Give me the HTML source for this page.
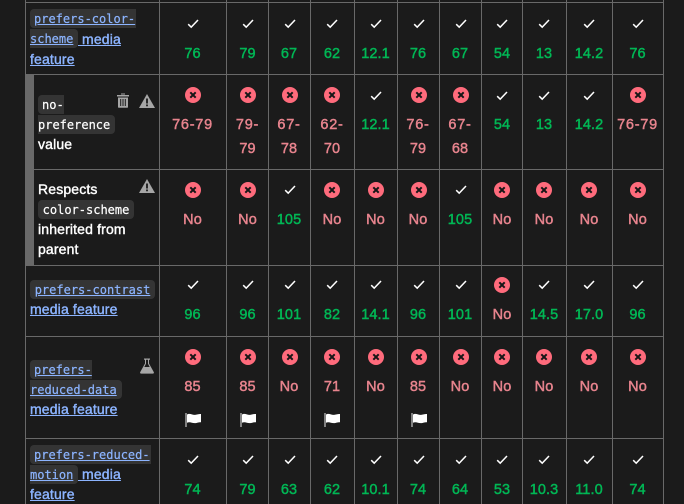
<!DOCTYPE html>
<html><head><meta charset="utf-8"><style>
html,body{margin:0;padding:0;background:#1b1b1b}
#p{position:relative;width:684px;height:504px;overflow:hidden;background:#1b1b1b;font:14px/20px "Liberation Sans",sans-serif;color:#fff}
.h,.v,.bar{position:absolute;background:#696969}
.h{left:25px;width:639px;height:1px}
.v{width:1px}
.bar{left:26px;top:75px;width:8px;height:190px}
.r{position:absolute;left:0;top:0;width:684px;height:0}
.r svg{position:absolute;top:0;width:18px;height:18px;overflow:visible}
.r span{position:absolute;text-align:center;font-size:14.5px;letter-spacing:.1px;white-space:nowrap;-webkit-text-stroke:.45px currentColor}
.g{color:#00b755}.n{color:#e8848e}
.r span.w{letter-spacing:.75px}
.c1{left:159px;width:67px}.c2{left:226px;width:43px}.c3{left:268px;width:42px}.c4{left:310px;width:44px}.c5{left:354px;width:43px}.c6{left:397px;width:42px}.c7{left:439px;width:42px}.c8{left:481px;width:42px}.c9{left:522px;width:44px}.c10{left:566px;width:46px}.c11{left:612px;width:51px}
svg.c1{left:184px;width:18px}svg.c2{left:239px}svg.c3{left:281px}svg.c4{left:323px}svg.c5{left:367px}svg.c6{left:410px}svg.c7{left:452px}svg.c8{left:493px}svg.c9{left:535px}svg.c10{left:580px}svg.c11{left:629px}
.l{position:absolute;white-space:nowrap;letter-spacing:.15px;-webkit-text-stroke:.4px currentColor;line-height:20px}
.a{color:#8cb4ff;text-decoration:underline}
.k{position:absolute;height:19px;background:#343434;font:12px/21px "DejaVu Sans Mono","Liberation Mono",monospace;white-space:nowrap;box-sizing:border-box;color:#fff;-webkit-text-stroke:.2px currentColor}
.k.a{color:#8cb4ff}
.i{position:absolute;overflow:visible}
</style></head><body><div id="p">
<svg width="0" height="0" style="position:absolute"><defs>
<symbol id="ck" viewBox="0 0 18 18"><path d="M4.200 9.200l3 3L14 5" fill="none" stroke="#fff" stroke-width="1.500"/></symbol>
<symbol id="xx" viewBox="0 0 18 18"><circle cx="9" cy="9" r="8" fill="#ff6b7c"/><path d="M6.300 6.300l5.400 5.400M11.700 6.300l-5.400 5.400" fill="none" stroke="#161616" stroke-width="2"/></symbol>
<symbol id="fl" viewBox="0 0 18 18"><path d="M2 2v14" stroke="#bbb" stroke-width="1.300" fill="none"/><path d="M3 3.500c3-1.600 5 .6 8 .4 2-.2 3-.9 6-.9v8.200c-3 0-4 .8-6 .9-3 .1-5-1.700-8-.4z" fill="#fff"/></symbol>
</defs></svg>

<div class="h" style="top:2px"></div><div class="h" style="top:74px"></div><div class="h" style="top:169px;left:34px;width:630px"></div><div class="h" style="top:265px"></div><div class="h" style="top:336px"></div><div class="h" style="top:438px"></div>
<div class="v" style="left:25px;top:0;height:504px"></div>
<div class="v" style="left:159px;top:0;height:504px"></div>
<div class="v" style="left:226px;top:0;height:504px"></div>
<div class="v" style="left:268px;top:0;height:504px"></div>
<div class="v" style="left:310px;top:0;height:504px"></div>
<div class="v" style="left:354px;top:0;height:504px"></div>
<div class="v" style="left:397px;top:0;height:504px"></div>
<div class="v" style="left:439px;top:0;height:504px"></div>
<div class="v" style="left:481px;top:0;height:504px"></div>
<div class="v" style="left:522px;top:0;height:504px"></div>
<div class="v" style="left:566px;top:0;height:504px"></div>
<div class="v" style="left:612px;top:0;height:504px"></div>
<div class="v" style="left:663px;top:0;height:504px"></div>
<div class="bar"></div>

<!-- left column -->
<span class="k a" style="left:30px;top:9px;width:106px;padding-left:4px;border-radius:4px 0 0 4px">prefers-color-</span>
<span class="k a" style="left:30px;top:29px;width:48px;border-radius:0 4px 4px 0">scheme</span>
<span class="l a" style="left:78px;top:29px">&nbsp;media</span>
<span class="l a" style="left:30px;top:48.500px">feature</span>

<span class="k" style="left:38px;top:95px;width:26px;padding-left:4px;border-radius:4px 0 0 4px">no-</span>
<span class="k" style="left:38px;top:115px;width:77px;border-radius:0 4px 4px 0">preference</span>
<span class="l" style="left:38px;top:134px">value</span>
<svg class="i" style="left:116px;top:93px" width="14" height="15" viewBox="0 0 14 15"><path d="M5 1.500V.5h4v1M1 2h12v1.500H1zM2 4.500h10V14a.8.8 0 0 1-.8.8H2.800A.8.8 0 0 1 2 14z" fill="#a6a6a6"/><path d="M4.700 6v7M7 6v7M9.300 6v7" stroke="#1b1b1b" stroke-width="1"/></svg>
<svg class="i" style="left:139px;top:94px" width="16" height="14" viewBox="0 0 16 14"><path d="M8 0l8 14H0z" fill="#a6a6a6"/><path d="M7.100 4.500h1.800v5H7.100zM7.100 10.500h1.800v1.800H7.100z" fill="#1b1b1b"/></svg>

<span class="l" style="left:38px;top:179px">Respects</span>
<span class="k" style="left:38px;top:200px;width:96px;text-align:center;border-radius:4px">color-scheme</span>
<span class="l" style="left:38px;top:219px">inherited from</span>
<span class="l" style="left:38px;top:239px">parent</span>
<svg class="i" style="left:139px;top:179px" width="16" height="14" viewBox="0 0 16 14"><path d="M8 0l8 14H0z" fill="#a6a6a6"/><path d="M7.100 4.500h1.800v5H7.100zM7.100 10.500h1.800v1.800H7.100z" fill="#1b1b1b"/></svg>

<span class="k a" style="left:30px;top:280px;width:125px;text-align:center;border-radius:4px">prefers-contrast</span>
<span class="l a" style="left:30px;top:299px">media feature</span>

<span class="k a" style="left:30px;top:360px;width:62px;padding-left:4px;border-radius:4px 0 0 4px">prefers-</span>
<span class="k a" style="left:30px;top:380px;width:92px;border-radius:0 4px 4px 0">reduced-data</span>
<span class="l a" style="left:30px;top:399px">media feature</span>
<svg class="i" style="left:140px;top:358px" width="14" height="16" viewBox="0 0 14 16"><path d="M4 .5h6v1.300H9v3.700l4.800 8.600a1 1 0 0 1-.9 1.500H1.100a1 1 0 0 1-.9-1.500L5 5.500V1.800H4z" fill="#a6a6a6"/><path d="M6 1.800h2v4l1.700 3.200H4.300L6 5.800z" fill="#1b1b1b"/></svg>

<span class="k a" style="left:30px;top:445px;width:121px;padding-left:4px;border-radius:4px 0 0 4px">prefers-reduced-</span>
<span class="k a" style="left:30px;top:465px;width:48px;border-radius:0 4px 4px 0">motion</span>
<span class="l a" style="left:78px;top:464px">&nbsp;media</span>
<span class="l a" style="left:30px;top:484px">feature</span>

<!-- row 1 -->
<div class="r" style="top:15px">
<svg class="c1"><use href="#ck"/></svg><svg class="c2"><use href="#ck"/></svg><svg class="c3"><use href="#ck"/></svg><svg class="c4"><use href="#ck"/></svg><svg class="c5"><use href="#ck"/></svg><svg class="c6"><use href="#ck"/></svg><svg class="c7"><use href="#ck"/></svg><svg class="c8"><use href="#ck"/></svg><svg class="c9"><use href="#ck"/></svg><svg class="c10"><use href="#ck"/></svg><svg class="c11"><use href="#ck"/></svg>
</div>
<div class="r" style="top:44px">
<span class="g c1">76</span><span class="g c2">79</span><span class="g c3">67</span><span class="g c4">62</span><span class="g c5">12.1</span><span class="g c6">76</span><span class="g c7">67</span><span class="g c8">54</span><span class="g c9">13</span><span class="g c10">14.2</span><span class="g c11">76</span>
</div>
<!-- row 2 -->
<div class="r" style="top:86px">
<svg class="c1"><use href="#xx"/></svg><svg class="c2"><use href="#xx"/></svg><svg class="c3"><use href="#xx"/></svg><svg class="c4"><use href="#xx"/></svg><svg class="c5" style="top:1px"><use href="#ck"/></svg><svg class="c6"><use href="#xx"/></svg><svg class="c7"><use href="#xx"/></svg><svg class="c8" style="top:1px"><use href="#ck"/></svg><svg class="c9" style="top:1px"><use href="#ck"/></svg><svg class="c10" style="top:1px"><use href="#ck"/></svg><svg class="c11"><use href="#xx"/></svg>
</div>
<div class="r" style="top:115px">
<span class="n w c1">76-79</span><span class="n w c2">79-</span><span class="n w c3">67-</span><span class="n w c4">62-</span><span class="g c5">12.1</span><span class="n w c6">76-</span><span class="n w c7">67-</span><span class="g c8">54</span><span class="g c9">13</span><span class="g c10">14.2</span><span class="n w c11">76-79</span>
</div>
<div class="r" style="top:139px">
<span class="n c2">79</span><span class="n c3">78</span><span class="n c4">70</span><span class="n c6">79</span><span class="n c7">68</span>
</div>
<!-- row 3 -->
<div class="r" style="top:181px">
<svg class="c1"><use href="#xx"/></svg><svg class="c2"><use href="#xx"/></svg><svg class="c3"><use href="#ck"/></svg><svg class="c4"><use href="#xx"/></svg><svg class="c5"><use href="#xx"/></svg><svg class="c6"><use href="#xx"/></svg><svg class="c7"><use href="#ck"/></svg><svg class="c8"><use href="#xx"/></svg><svg class="c9"><use href="#xx"/></svg><svg class="c10"><use href="#xx"/></svg><svg class="c11"><use href="#xx"/></svg>
</div>
<div class="r" style="top:210px">
<span class="n c1">No</span><span class="n c2">No</span><span class="g c3">105</span><span class="n c4">No</span><span class="n c5">No</span><span class="n c6">No</span><span class="g c7">105</span><span class="n c8">No</span><span class="n c9">No</span><span class="n c10">No</span><span class="n c11">No</span>
</div>
<!-- row 4 -->
<div class="r" style="top:276px">
<svg class="c1"><use href="#ck"/></svg><svg class="c2"><use href="#ck"/></svg><svg class="c3"><use href="#ck"/></svg><svg class="c4"><use href="#ck"/></svg><svg class="c5"><use href="#ck"/></svg><svg class="c6"><use href="#ck"/></svg><svg class="c7"><use href="#ck"/></svg><svg class="c8"><use href="#xx"/></svg><svg class="c9"><use href="#ck"/></svg><svg class="c10"><use href="#ck"/></svg><svg class="c11"><use href="#ck"/></svg>
</div>
<div class="r" style="top:305px">
<span class="g c1">96</span><span class="g c2">96</span><span class="g c3">101</span><span class="g c4">82</span><span class="g c5">14.1</span><span class="g c6">96</span><span class="g c7">101</span><span class="n c8">No</span><span class="g c9">14.5</span><span class="g c10">17.0</span><span class="g c11">96</span>
</div>
<!-- row 5 -->
<div class="r" style="top:348px">
<svg class="c1"><use href="#xx"/></svg><svg class="c2"><use href="#xx"/></svg><svg class="c3"><use href="#xx"/></svg><svg class="c4"><use href="#xx"/></svg><svg class="c5"><use href="#xx"/></svg><svg class="c6"><use href="#xx"/></svg><svg class="c7"><use href="#xx"/></svg><svg class="c8"><use href="#xx"/></svg><svg class="c9"><use href="#xx"/></svg><svg class="c10"><use href="#xx"/></svg><svg class="c11"><use href="#xx"/></svg>
</div>
<div class="r" style="top:377px">
<span class="n c1">85</span><span class="n c2">85</span><span class="n c3">No</span><span class="n c4">71</span><span class="n c5">No</span><span class="n c6">85</span><span class="n c7">No</span><span class="n c8">No</span><span class="n c9">No</span><span class="n c10">No</span><span class="n c11">No</span>
</div>
<div class="r" style="top:411px">
<svg class="c1"><use href="#fl"/></svg><svg class="c2"><use href="#fl"/></svg><svg class="c4"><use href="#fl"/></svg><svg class="c6"><use href="#fl"/></svg>
</div>
<!-- row 6 -->
<div class="r" style="top:451px">
<svg class="c1"><use href="#ck"/></svg><svg class="c2"><use href="#ck"/></svg><svg class="c3"><use href="#ck"/></svg><svg class="c4"><use href="#ck"/></svg><svg class="c5"><use href="#ck"/></svg><svg class="c6"><use href="#ck"/></svg><svg class="c7"><use href="#ck"/></svg><svg class="c8"><use href="#ck"/></svg><svg class="c9"><use href="#ck"/></svg><svg class="c10"><use href="#ck"/></svg><svg class="c11"><use href="#ck"/></svg>
</div>
<div class="r" style="top:480px">
<span class="g c1">74</span><span class="g c2">79</span><span class="g c3">63</span><span class="g c4">62</span><span class="g c5">10.1</span><span class="g c6">74</span><span class="g c7">64</span><span class="g c8">53</span><span class="g c9">10.3</span><span class="g c10">11.0</span><span class="g c11">74</span>
</div>
</div></body></html>
